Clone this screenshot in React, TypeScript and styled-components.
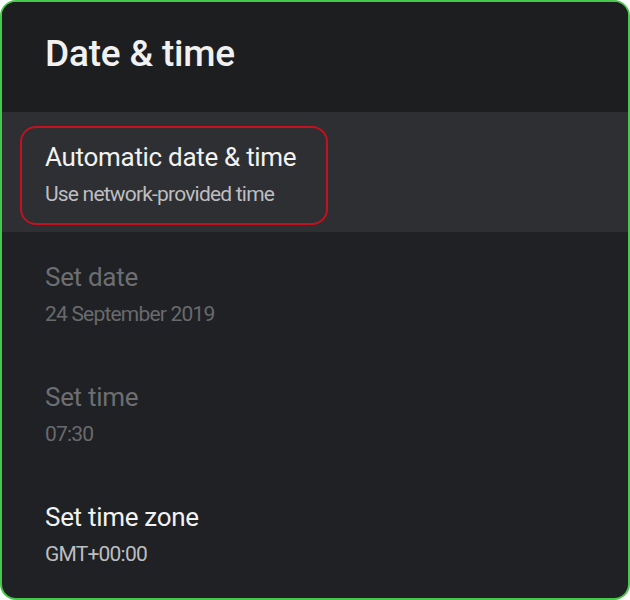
import React from "react";
import styled, { createGlobalStyle } from "styled-components";

const Global = createGlobalStyle`
  html, body { margin: 0; padding: 0; background: #ffffff; }
  body { font-family: Roboto, "Noto Sans", sans-serif; }
`;

const Frame = styled.div`
  width: 630px;
  height: 600px;
  box-sizing: border-box;
  border: 2px solid #46c94a;
  border-radius: 16px;
  background: #202124;
  overflow: hidden;
  display: flex;
  flex-direction: column;
`;

const Header = styled.div`
  height: 110px;
  background: #1d1e20;
  padding: 30px 0 0 43px;
  box-sizing: border-box;
`;

const Title = styled.h1`
  margin: 0;
  font-size: 37px;
  line-height: 44px;
  font-weight: 500;
  color: #f1f1f1;
  letter-spacing: -0.2px;
`;

const Row = styled.div<{ $active?: boolean }>`
  height: 120px;
  background: ${(p) => (p.$active ? "#2e2f32" : "transparent")};
  padding: ${(p) => (p.$active ? "14px 0 0 18px" : "30px 0 0 43px")};
  box-sizing: border-box;
`;

const Focus = styled.div`
  border: 2px solid #c4111f;
  border-radius: 16px;
  padding: 14px 23px 17px 23px;
  width: 258px;
`;

const Label = styled.div<{ $dim?: boolean }>`
  font-size: 26px;
  color: ${(p) => (p.$dim ? "#6c6e71" : "#f2f2f2")};
  letter-spacing: -0.3px;
  line-height: 30px;
`;

const Sub = styled.div<{ $dim?: boolean }>`
  font-size: 21px;
  color: ${(p) => (p.$dim ? "#686a6d" : "#bdbec0")};
  letter-spacing: -0.8px;
  line-height: 24px;
  margin-top: 10px;
`;

const Text = styled.div``;

export default function App() {
  return (
    <>
      <Global />
      <Frame>
        <Header>
          <Title>Date &amp; time</Title>
        </Header>
        <Row $active>
          <Focus>
            <Label>Automatic date &amp; time</Label>
            <Sub>Use network-provided time</Sub>
          </Focus>
        </Row>
        <Row>
          <Text>
            <Label $dim>Set date</Label>
            <Sub $dim>24 September 2019</Sub>
          </Text>
        </Row>
        <Row>
          <Text>
            <Label $dim>Set time</Label>
            <Sub $dim>07:30</Sub>
          </Text>
        </Row>
        <Row>
          <Text>
            <Label>Set time zone</Label>
            <Sub>GMT+00:00</Sub>
          </Text>
        </Row>
      </Frame>
    </>
  );
}
